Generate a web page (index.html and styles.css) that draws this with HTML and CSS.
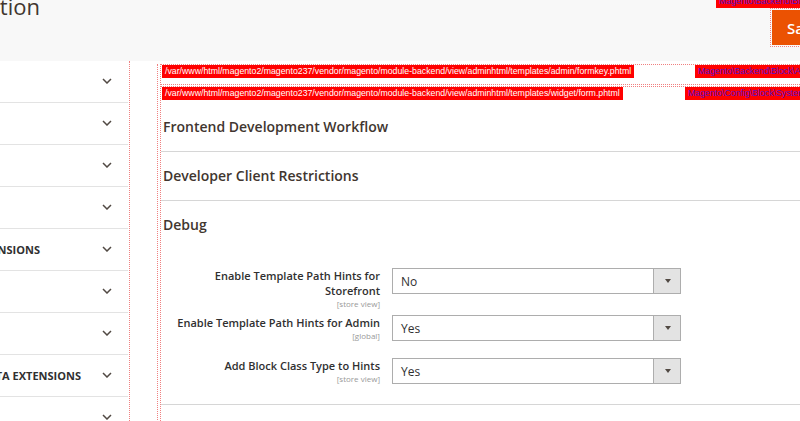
FILE: index.html
```html
<!DOCTYPE html>
<html>
<head>
<meta charset="utf-8">
<link rel="stylesheet" href="styles.css">
</head>
<body>
<div class="page">
  <header class="header">
    <div class="title-box"><h1 class="title">Configuration</h1></div>
    <div class="actions">
      <span class="hint-class top-hint">Magento\Backend\Block\Widget\Button\SplitButton</span>
      <div class="btn-wrap"><button class="save">Save Config</button></div>
    </div>
  </header>
  <div class="main">
    <aside class="sidebar">
      <div class="tab"><span class="chev"><svg width="10" height="6" viewBox="0 0 10 6"><polyline points="1,1 5,5 9,1" fill="none" stroke="#514943" stroke-width="1.5"/></svg></span></div>
      <div class="tab"><span class="chev"><svg width="10" height="6" viewBox="0 0 10 6"><polyline points="1,1 5,5 9,1" fill="none" stroke="#514943" stroke-width="1.5"/></svg></span></div>
      <div class="tab"><span class="chev"><svg width="10" height="6" viewBox="0 0 10 6"><polyline points="1,1 5,5 9,1" fill="none" stroke="#514943" stroke-width="1.5"/></svg></span></div>
      <div class="tab"><span class="chev"><svg width="10" height="6" viewBox="0 0 10 6"><polyline points="1,1 5,5 9,1" fill="none" stroke="#514943" stroke-width="1.5"/></svg></span></div>
      <div class="tab"><div class="tab-label w40"><span>EXTENSIONS</span></div><span class="chev"><svg width="10" height="6" viewBox="0 0 10 6"><polyline points="1,1 5,5 9,1" fill="none" stroke="#514943" stroke-width="1.5"/></svg></span></div>
      <div class="tab"><span class="chev"><svg width="10" height="6" viewBox="0 0 10 6"><polyline points="1,1 5,5 9,1" fill="none" stroke="#514943" stroke-width="1.5"/></svg></span></div>
      <div class="tab"><span class="chev"><svg width="10" height="6" viewBox="0 0 10 6"><polyline points="1,1 5,5 9,1" fill="none" stroke="#514943" stroke-width="1.5"/></svg></span></div>
      <div class="tab"><div class="tab-label w81"><span>DATA EXTENSIONS</span></div><span class="chev"><svg width="10" height="6" viewBox="0 0 10 6"><polyline points="1,1 5,5 9,1" fill="none" stroke="#514943" stroke-width="1.5"/></svg></span></div>
      <div class="tab"><span class="chev"><svg width="10" height="6" viewBox="0 0 10 6"><polyline points="1,1 5,5 9,1" fill="none" stroke="#514943" stroke-width="1.5"/></svg></span></div>
    </aside>
    <div class="content">
      <div class="inner">
        <div class="hints formkey">
          <span class="hint-file">/var/www/html/magento2/magento237/vendor/magento/module-backend/view/adminhtml/templates/admin/formkey.phtml</span>
          <span class="hint-class hc1">Magento\Backend\Block\Admin\Formkey</span>
        </div>
        <div class="hints form">
          <span class="hint-file">/var/www/html/magento2/magento237/vendor/magento/module-backend/view/adminhtml/templates/widget/form.phtml</span>
          <span class="hint-class hc2">Magento\Config\Block\System\Config\Form</span>
          <div class="section"><h2 class="section-title">Frontend Development Workflow</h2></div>
          <div class="section"><h2 class="section-title">Developer Client Restrictions</h2></div>
          <div class="section open">
            <h2 class="section-title">Debug</h2>
            <div class="fieldset">
              <div class="row r1">
                <div class="label"><span>Enable Template Path Hints for Storefront</span><span class="scope">[store view]</span></div>
                <div class="select"><span class="value">No</span><span class="arrow"></span></div>
              </div>
              <div class="row r2">
                <div class="label"><span>Enable Template Path Hints for Admin</span><span class="scope">[global]</span></div>
                <div class="select"><span class="value">Yes</span><span class="arrow"></span></div>
              </div>
              <div class="row r3">
                <div class="label"><span>Add Block Class Type to Hints</span><span class="scope">[store view]</span></div>
                <div class="select"><span class="value">Yes</span><span class="arrow"></span></div>
              </div>
            </div>
          </div>
        </div>
      </div>
    </div>
  </div>
</div>
</body>
</html>
```
FILE: styles.css
```css
html, body {
  margin: 0;
  padding: 0;
  background: #ffffff;
  overflow: hidden;
}
.page {
  width: 800px;
  height: 421px;
  overflow: hidden;
  font-family: "Open Sans", "Noto Sans", sans-serif;
  color: #303030;
}
.header {
  height: 61px;
  background: #f8f8f8;
  display: flex;
  justify-content: space-between;
  position: relative;
}
.title-box {
  width: 40px;
  display: flex;
  justify-content: flex-end;
  white-space: nowrap;
}
.title {
  margin: -9px 0 0 0;
  font-size: 22px;
  line-height: 30px;
  font-weight: 400;
  color: #41362f;
}
.actions {
  position: relative;
  width: 84px;
}
.top-hint {
  position: absolute;
  left: 0;
  top: -5px;
}
.btn-wrap {
  position: absolute;
  left: 54px;
  top: 8px;
  border: 1px dotted #f08080;
  padding: 1px 0 1px 1px;
  width: 60px;
}
.save {
  display: block;
  height: 35px;
  width: 90px;
  border: 0;
  margin: 0;
  padding: 0 0 0 15px;
  text-align: left;
  background: #eb5202;
  color: #ffffff;
  font-family: "Open Sans", sans-serif;
  font-weight: 600;
  font-size: 15px;
  white-space: nowrap;
}
.main {
  display: flex;
  height: 360px;
}
.sidebar {
  width: 128px;
  flex: none;
  background: #ffffff;
  overflow: hidden;
}
.tab {
  height: 41px;
  border-bottom: 1px solid #e3e3e3;
  display: flex;
  align-items: center;
  position: relative;
}
.tab-label {
  display: flex;
  justify-content: flex-end;
  white-space: nowrap;
  font-size: 11px;
  font-weight: 700;
  color: #303030;
}
.w40 { width: 40px; }
.w81 { width: 81px; }
.chev {
  position: absolute;
  left: 102px;
  top: 17px;
  width: 10px;
  height: 6px;
  display: flex;
}
.content {
  flex: 1;
  margin-left: 1px;
  border-left: 1px dotted #f08080;
  padding-left: 27px;
}
.inner {
  border-left: 1px dotted #f08080;
  padding-left: 2px;
  height: 100%;
}
.hints {
  position: relative;
  border: 1px dotted #f08080;
  border-right: 0;
}
.formkey {
  margin-top: 3px;
  height: 19px;
}
.form {
  margin-top: 1px;
  padding: 16px 0 0 0;
  height: 400px;
  border-bottom: 0;
}
.hint-file, .hint-class {
  position: absolute;
  font-family: "Liberation Sans", Arial, sans-serif;
  font-size: 8.75px;
  line-height: 13px;
  padding: 0 3px;
  background: #ff0000;
  white-space: nowrap;
}
.hint-file {
  left: 1px;
  top: 0;
  color: #ffffff;
}
.hint-class {
  color: #5a10c8;
}
.hc1 { left: 534px; top: 0; }
.hc2 { left: 524px; top: 0; }
.section {
  border-bottom: 1px solid #d6d6d6;
}
.section-title {
  margin: 0;
  height: 48px;
  line-height: 48px;
  padding-left: 2px;
  font-size: 14px;
  font-weight: 600;
  color: #41362f;
}
.fieldset {
  padding: 19px 0 20px 0;
}
.row {
  display: grid;
  grid-template-columns: 219px 289px;
  column-gap: 12px;
  align-items: start;
}
.r1 { margin-bottom: 6px; }
.r2 { margin-bottom: 17px; }
.label {
  display: flex;
  flex-direction: column;
  text-align: right;
  font-size: 11px;
  line-height: 15px;
  font-weight: 600;
  color: #303030;
}
.scope {
  font-size: 8px;
  line-height: 11px;
  font-weight: 400;
  color: #999999;
}
.select {
  height: 24px;
  border: 1px solid #adadad;
  display: flex;
  align-items: center;
  justify-content: space-between;
  background: #ffffff;
}
.value {
  padding-left: 8px;
  font-size: 12px;
  color: #303030;
}
.arrow {
  width: 26px;
  height: 24px;
  background: #e3e3e3;
  border-left: 1px solid #adadad;
  position: relative;
}
.arrow::after {
  content: "";
  position: absolute;
  left: 11px;
  top: 10px;
  border-left: 3px solid transparent;
  border-right: 3px solid transparent;
  border-top: 4px solid #514943;
}
```
